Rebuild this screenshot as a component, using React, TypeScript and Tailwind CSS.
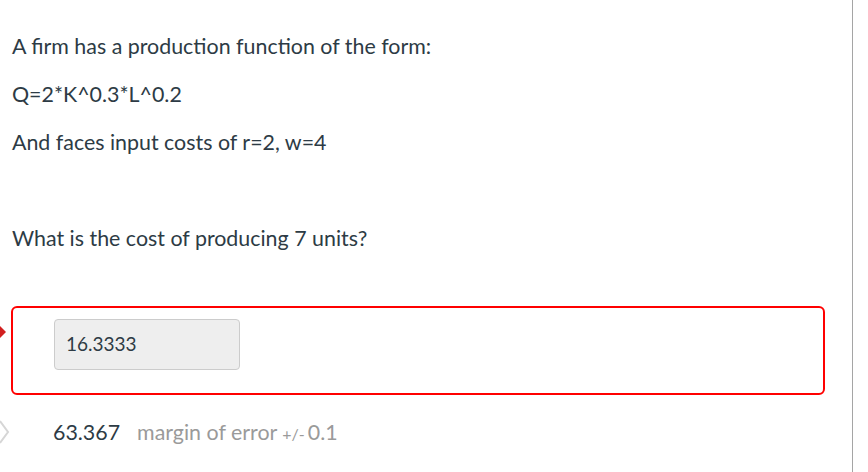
import React from "react";

const App: React.FC = () => {
  return (
    <div className="flex h-[472px] w-[868px] overflow-hidden bg-white font-['Lato','Liberation_Sans',sans-serif] text-[#2d3b45]">
      <div className="relative w-[853px] border-r border-[#a5a5a5] pt-[31px]">
        <div className="pl-[12px] text-[21.4px] leading-[30px]">
          <p className="mb-[18px]">A firm has a production function of the form:</p>
          <p className="mb-[18px]">Q=2*K^0.3*L^0.2</p>
          <p className="mb-[18px]">And faces input costs of r=2, w=4</p>
          <p className="mb-[18px] h-[30px]"></p>
          <p>What is the cost of producing 7 units?</p>
        </div>

        {/* answer given */}
        <div className="relative mt-[53px] ml-[11px] mr-[27px] h-[89px] rounded-[6px] border-2 border-[#ff0000] pl-[41px] pt-[11px]">
          <div className="flex h-[51px] w-[186px] items-center rounded-[4px] border border-[#cccccc] bg-[#eeeeee] pl-[11px] text-[19px]">
            16.3333
          </div>
        </div>
        <svg className="absolute left-0 top-[322px]" width="10" height="20" viewBox="0 0 10 20">
          <polygon points="-4,0 6,10 -4,20" fill="#d21f1f" />
        </svg>

        {/* correct answer */}
        <div className="mt-[19px] flex items-baseline pl-[53px] text-[21.4px] leading-[36px]">
          <span>63.367</span>
          <span className="ml-[17px] text-[#9a9a9a]">margin of error</span>
          <span className="ml-[5px] text-[16px] text-[#9a9a9a]">+/-</span>
          <span className="ml-[3px] text-[#9a9a9a]">0.1</span>
        </div>
        <svg className="absolute left-0 top-[420px]" width="12" height="24" viewBox="0 0 12 24">
          <polyline points="0,1 8,12 0,23" fill="none" stroke="#d6d6d6" strokeWidth="2" />
        </svg>
      </div>
    </div>
  );
};

export default App;
